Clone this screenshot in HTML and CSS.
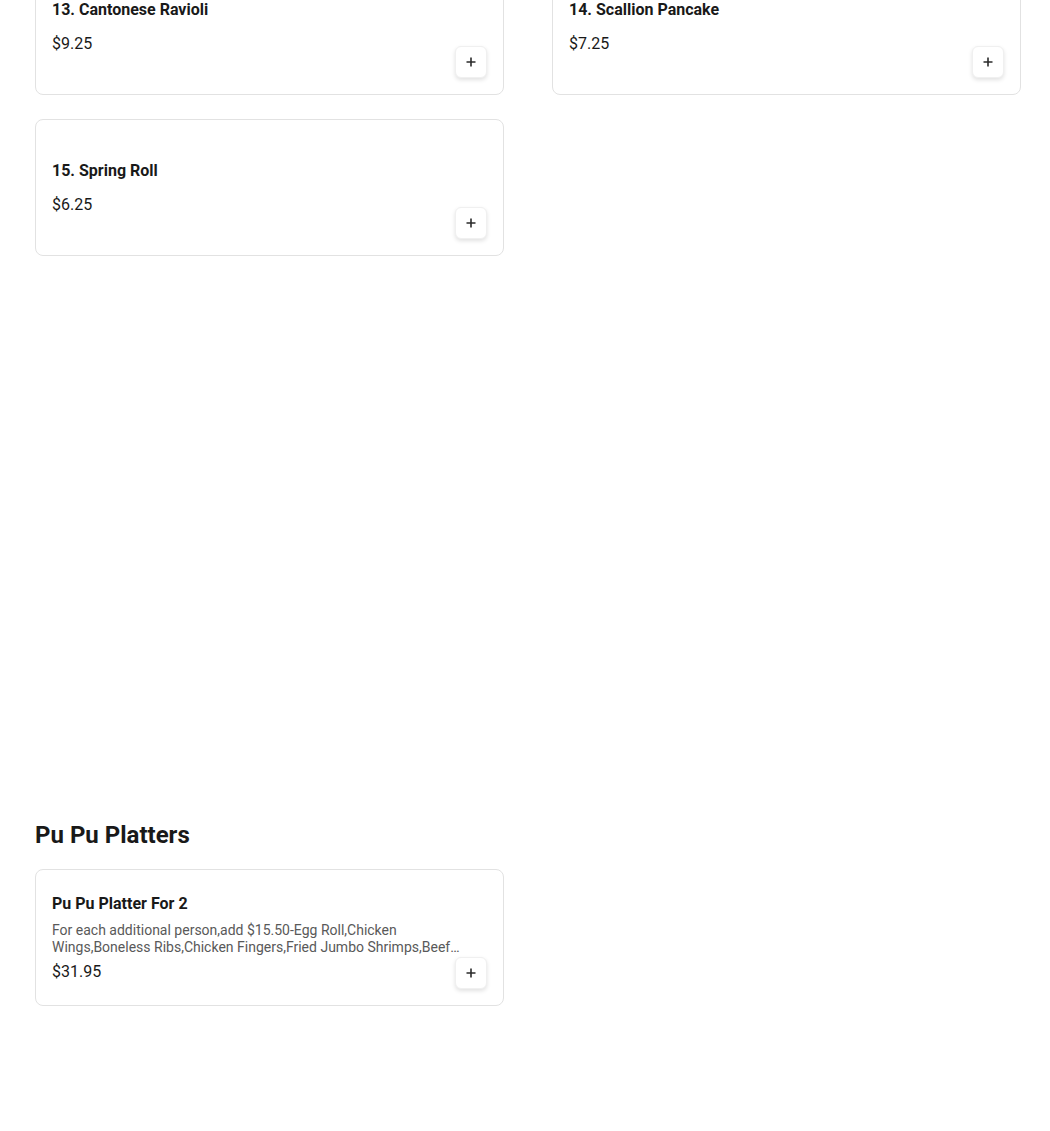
FILE: index.html
```html
<!DOCTYPE html>
<html lang="en">
<head>
<meta charset="utf-8">
<title>Menu</title>
<link rel="stylesheet" href="styles.css">
</head>
<body>
<main class="menu">
  <section class="category category-first">
    <div class="grid">
      <div class="card">
        <div class="info">
          <div class="title">13. Cantonese Ravioli</div>
          <div class="desc"></div>
          <div class="price">$9.25</div>
        </div>
        <button class="add" aria-label="Add"><svg width="12" height="12" viewBox="0 0 12 12"><path d="M6 1.5v9M1.5 6h9" stroke="#2b2b2b" stroke-width="1.6" fill="none"/></svg></button>
      </div>
      <div class="card">
        <div class="info">
          <div class="title">14. Scallion Pancake</div>
          <div class="desc"></div>
          <div class="price">$7.25</div>
        </div>
        <button class="add" aria-label="Add"><svg width="12" height="12" viewBox="0 0 12 12"><path d="M6 1.5v9M1.5 6h9" stroke="#2b2b2b" stroke-width="1.6" fill="none"/></svg></button>
      </div>
      <div class="card">
        <div class="info">
          <div class="title">15. Spring Roll</div>
          <div class="desc"></div>
          <div class="price">$6.25</div>
        </div>
        <button class="add" aria-label="Add"><svg width="12" height="12" viewBox="0 0 12 12"><path d="M6 1.5v9M1.5 6h9" stroke="#2b2b2b" stroke-width="1.6" fill="none"/></svg></button>
      </div>
    </div>
  </section>
  <section class="category category-pupu">
    <h2 class="cat-title">Pu Pu Platters</h2>
    <div class="grid">
      <div class="card">
        <div class="info">
          <div class="title">Pu Pu Platter For 2</div>
          <div class="desc">For each additional person,add $15.50-Egg Roll,Chicken Wings,Boneless Ribs,Chicken Fingers,Fried Jumbo Shrimps,Beef Teriyaki,Chicken Teriyaki,Crab Rangoons</div>
          <div class="price">$31.95</div>
        </div>
        <button class="add" aria-label="Add"><svg width="12" height="12" viewBox="0 0 12 12"><path d="M6 1.5v9M1.5 6h9" stroke="#2b2b2b" stroke-width="1.6" fill="none"/></svg></button>
      </div>
    </div>
  </section>
</main>
</body>
</html>
```
FILE: styles.css
```css
* { box-sizing: border-box; }
html, body { margin: 0; padding: 0; background: #fff; }
body {
  font-family: Roboto, "Liberation Sans", Arial, sans-serif;
  color: #191919;
}
.menu {
  padding: 0 29px 0 35px;
}
.category-first {
  margin-top: -42px;
}
.category-pupu {
  margin-top: 565px;
}
.cat-title {
  font-size: 24px;
  line-height: 28px;
  font-weight: 700;
  margin: 0 0 20px 0;
  color: #191919;
}
.grid {
  display: grid;
  grid-template-columns: 1fr 1fr;
  column-gap: 48px;
  row-gap: 24px;
}
.card {
  position: relative;
  height: 137px;
  border: 1px solid #e2e2e2;
  border-radius: 8px;
  background: #fff;
  display: flex;
  align-items: center;
  padding: 0 16px;
}
.info {
  width: 100%;
  display: flex;
  flex-direction: column;
}
.title {
  font-size: 16px;
  line-height: 20px;
  font-weight: 700;
  margin-bottom: 8px;
}
.desc {
  font-size: 14px;
  line-height: 17px;
  color: #595959;
  margin-bottom: 6px;
  display: -webkit-box;
  -webkit-line-clamp: 2;
  -webkit-box-orient: vertical;
  overflow: hidden;
}
.price {
  font-size: 16px;
  line-height: 20px;
  font-weight: 400;
}
.add {
  position: absolute;
  right: 16px;
  bottom: 16px;
  width: 32px;
  height: 32px;
  padding: 0;
  border: 1px solid #f0f0f0;
  border-radius: 6px;
  background: #fff;
  box-shadow: 0 2px 4px rgba(0, 0, 0, 0.12);
  display: flex;
  align-items: center;
  justify-content: center;
  cursor: pointer;
}
.add svg { display: block; }
```
